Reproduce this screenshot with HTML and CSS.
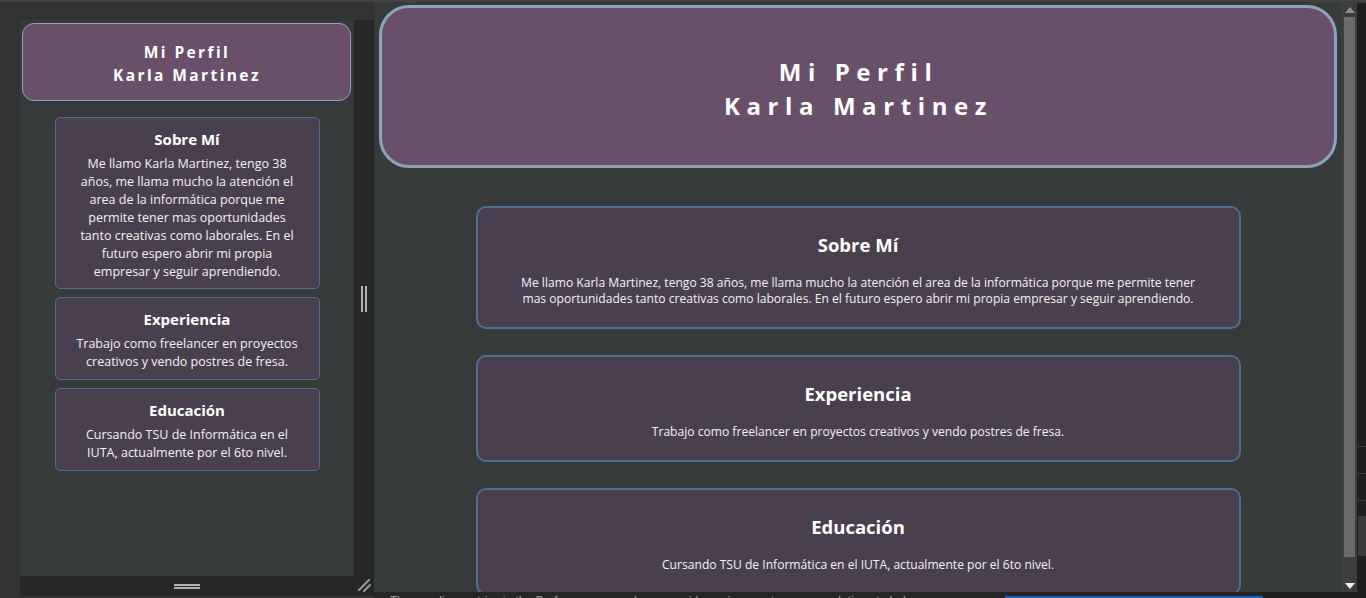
FILE: index.html
```html
<!DOCTYPE html>
<html lang="es">
<head>
<meta charset="utf-8">
<title>Mi Perfil</title>
<link rel="stylesheet" href="styles.css">
</head>
<body>
<div class="topline"></div>
<div class="screen">
  <div class="gutter"></div>

  <div class="left-dock">
    <div class="left-main">
      <div class="left-pane">
        <header class="lp-header">
          <div>Mi Perfil</div>
          <div>Karla Martinez</div>
        </header>
        <div class="lp-cards">
          <section class="lp-card lp-card-first">
            <h2>Sobre Mí</h2>
            <p>Me llamo Karla Martinez, tengo 38 años, me llama mucho la atención el area de la informática porque me permite tener mas oportunidades tanto creativas como laborales. En el futuro espero abrir mi propia empresar y seguir aprendiendo.</p>
          </section>
          <section class="lp-card">
            <h2>Experiencia</h2>
            <p>Trabajo como freelancer en proyectos creativos y vendo postres de fresa.</p>
          </section>
          <section class="lp-card">
            <h2>Educación</h2>
            <p>Cursando TSU de Informática en el IUTA, actualmente por el 6to nivel.</p>
          </section>
        </div>
      </div>
      <div class="v-split"><span class="vgrip"></span></div>
    </div>
    <div class="left-bottom">
      <div class="h-bar"><span class="hgrip"></span></div>
      <div class="corner">
        <svg width="14" height="14" viewBox="0 0 14 14"><path d="M12 2 L2 12 M13 7 L7 13" stroke="#9a9a9a" stroke-width="2" stroke-linecap="round" fill="none"/></svg>
      </div>
    </div>
  </div>

  <div class="right-dock">
    <div class="right-main">
      <div class="right-pane">
        <header class="rp-header">
          <div>Mi Perfil</div>
          <div>Karla Martinez</div>
        </header>
        <div class="rp-cards">
          <section class="rp-card">
            <h2>Sobre Mí</h2>
            <p>Me llamo Karla Martinez, tengo 38 años, me llama mucho la atención el area de la informática porque me permite tener mas oportunidades tanto creativas como laborales. En el futuro espero abrir mi propia empresar y seguir aprendiendo.</p>
          </section>
          <section class="rp-card">
            <h2>Experiencia</h2>
            <p>Trabajo como freelancer en proyectos creativos y vendo postres de fresa.</p>
          </section>
          <section class="rp-card">
            <h2>Educación</h2>
            <p>Cursando TSU de Informática en el IUTA, actualmente por el 6to nivel.</p>
          </section>
        </div>
      </div>
      <div class="scrollbar">
        <div class="sb-up"><svg width="10" height="6" viewBox="0 0 10 6"><path d="M0 6 L5 0 L10 6 Z" fill="#8e8e8e"/></svg></div>
        <div class="sb-track"><div class="sb-thumb"></div></div>
        <div class="sb-down"><svg width="10" height="6" viewBox="0 0 10 6"><path d="M0 0 L10 0 L5 6 Z" fill="#f0f0f0"/></svg></div>
      </div>
      <div class="outer-strip">
        <div class="os-line os-l1"></div>
        <div class="os-line os-l2"></div>
        <div class="os-line os-l3"></div>
        <div class="os-block"></div>
      </div>
    </div>
    <div class="bottom-strip">
      <div class="bs-text">The new live metrics in the Performance panel now provide environment recommendations to help you</div>
      <div class="bs-blue"></div>
      <div class="bs-rest"></div>
    </div>
  </div>
</div>
</body>
</html>
```

FILE: styles.css
```css
* { box-sizing: border-box; }

html, body {
  margin: 0;
  padding: 0;
}

body {
  width: 1366px;
  height: 598px;
  overflow: hidden;
  background: #333333;
  font-family: "Open Sans", "Noto Sans", sans-serif;
  color: #ffffff;
}

.topline {
  height: 2px;
  background: #434343;
}

.screen {
  display: flex;
  height: 596px;
}

.gutter {
  width: 20px;
  flex: none;
}

/* ---------- left dock ---------- */
.left-dock {
  width: 354px;
  flex: none;
  display: flex;
  flex-direction: column;
  padding-top: 18px;
}

.left-main {
  display: flex;
  height: 556px;
}

.left-pane {
  width: 334px;
  background: #373a3b;
  overflow: hidden;
}

.v-split {
  width: 20px;
  background: #262727;
  display: flex;
  align-items: center;
  justify-content: center;
  padding-top: 2px;
}

.vgrip {
  width: 6px;
  height: 26px;
  border-left: 2px solid #b4b4b4;
  border-right: 2px solid #b4b4b4;
}

.left-bottom {
  display: flex;
  height: 20px;
}

.h-bar {
  width: 334px;
  background: #262727;
  display: flex;
  align-items: center;
  justify-content: center;
}

.hgrip {
  width: 26px;
  height: 5px;
  border-top: 2px solid #b4b4b4;
  border-bottom: 2px solid #b4b4b4;
}

.corner {
  width: 20px;
  background: #262727;
  display: flex;
  align-items: flex-end;
  justify-content: center;
  padding-bottom: 4px;
}

.lp-header {
  margin: 3px 3px 0 2px;
  height: 78px;
  border: 1px solid #8ea3ba;
  border-radius: 12px;
  background: #6a4f6b;
  display: flex;
  flex-direction: column;
  align-items: center;
  justify-content: center;
  font-size: 15.5px;
  line-height: 23px;
  font-weight: 700;
  letter-spacing: 2.4px;
  padding: 4px 0 0 1px;
}

.lp-cards {
  margin-top: 16px;
}

.lp-card {
  width: 265px;
  margin: 0 auto 8px;
  border: 1px solid #4e6e95;
  border-radius: 5px;
  background: #4a3f4e;
  padding: 11px 19px 8px;
  text-align: center;
}

.lp-card-first {
  padding-bottom: 7px;
}

.lp-card h2 {
  margin: 0 0 6px;
  font-size: 15px;
  line-height: 20px;
  font-weight: 700;
}

.lp-card p {
  margin: 0;
  font-size: 12.5px;
  line-height: 18px;
  color: #f2f2f2;
}

/* ---------- right dock ---------- */
.right-dock {
  flex: 1;
  display: flex;
  flex-direction: column;
  padding-top: 1px;
  background: #3a3a3a;
}

.right-main {
  display: flex;
  height: 589px;
}

.right-pane {
  width: 968px;
  background: #373a3b;
  overflow: hidden;
}

.rp-header {
  margin: 2px 5px 0;
  height: 163px;
  border: 3px solid #8ea3ba;
  border-radius: 30px;
  background: #6a4f6b;
  display: flex;
  flex-direction: column;
  align-items: center;
  justify-content: center;
  font-size: 24px;
  line-height: 34px;
  font-weight: 700;
  letter-spacing: 6.6px;
  padding: 4px 0 0 1px;
}

.rp-cards {
  margin-top: 38px;
}

.rp-card {
  width: 765px;
  margin: 0 auto 26px;
  border: 2px solid #4e6e95;
  border-radius: 10px;
  background: #4a3f4e;
  padding: 25px 35px 20px;
  text-align: center;
}

.rp-card h2 {
  margin: 0 0 18px;
  font-size: 18.5px;
  line-height: 24px;
  font-weight: 700;
}

.rp-card p {
  margin: 0;
  font-size: 12.1px;
  line-height: 16px;
  color: #f2f2f2;
}

/* scrollbar */
.scrollbar {
  width: 15px;
  background: #3e3e3e;
  display: flex;
  flex-direction: column;
}

.sb-up, .sb-down {
  height: 14px;
  display: flex;
  align-items: center;
  justify-content: center;
}

.sb-track {
  flex: 1;
  padding: 0 2px;
}

.sb-thumb {
  height: 540px;
  background: #6a6a6a;
}

.sb-down {
  height: 32px;
  align-items: flex-end;
  padding-bottom: 3px;
}

.outer-strip {
  flex: 1;
  background: #1f1f1f;
  display: flex;
  flex-direction: column;
}

.os-line {
  height: 1px;
  background: #3c3c3c;
}

.os-l1 { margin-top: 443px; }
.os-l2 { margin-top: 26px; }
.os-l3 { margin-top: 26px; }

.os-block {
  margin: 15px 0 0 1px;
  height: 40px;
  background: #3a3a3a;
}

.bottom-strip {
  height: 6px;
  display: flex;
  overflow: hidden;
  background: #262626;
}

.bs-text {
  width: 631px;
  padding: 2px 0 0 16px;
  font-family: "Liberation Sans", sans-serif;
  font-size: 12px;
  line-height: 14px;
  color: #9a9a9a;
  white-space: nowrap;
  overflow: hidden;
}

.bs-blue {
  width: 258px;
  margin-top: 4px;
  background: #1c5fc2;
}

.bs-rest {
  flex: 1;
  background: #1f1f1f;
}
```
